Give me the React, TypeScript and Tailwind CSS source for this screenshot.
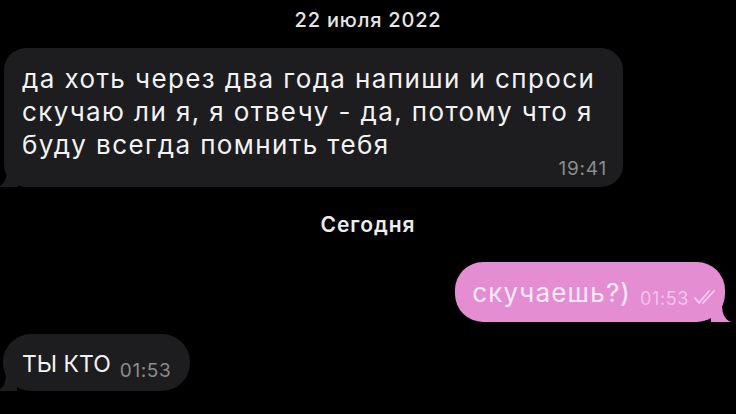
const font = { fontFamily: "Inter, 'Noto Sans', sans-serif" };

function TailLeft({ color }: { color: string }) {
  return (
    <svg className="absolute -left-[6px] bottom-0" width="20" height="18" viewBox="0 0 20 18">
      <path d="M20 0 L20 18 L0 18 C7 15 9 9 9 0 Z" fill={color} />
    </svg>
  );
}

function TailRight({ color }: { color: string }) {
  return (
    <svg className="absolute -right-[6px] bottom-0" width="20" height="18" viewBox="0 0 20 18">
      <path d="M0 0 L0 18 L20 18 C13 15 11 9 11 0 Z" fill={color} />
    </svg>
  );
}

function Checks() {
  return (
    <svg width="24" height="16" viewBox="0 0 24 16" fill="none" stroke="#f8d0f0" strokeWidth="1.8" strokeLinecap="round" strokeLinejoin="round">
      <path d="M2 9 L6 14 L16 2" />
      <path d="M10 14 L21 2" />
    </svg>
  );
}

export default function App() {
  return (
    <div className="w-[736px] h-[414px] bg-black overflow-hidden flex flex-col" style={font}>
      <div className="text-center text-[20px] leading-[24px] font-medium tracking-[0.8px] text-[#e6e6e6] pt-[8px]">
        22 июля 2022
      </div>

      <div className="relative ml-[4px] mt-[16px] w-[619px] bg-[#1d1d1f] rounded-[22px] pl-[18px] pr-[16px] pt-[14px] pb-[7px]">
        <p className="text-[26px] leading-[33px] text-[#f2f2f2] tracking-[1.4px]">
          да хоть через два года напиши и спроси
          <br />
          скучаю ли я, я отвечу - да, потому что я
          <br />
          буду всегда помнить тебя
        </p>
        <div className="flex justify-end -mt-[3px]">
          <span className="text-[19px] leading-[22px] tracking-[0.8px] text-[#8b8b8d]">19:41</span>
        </div>
        <TailLeft color="#1d1d1f" />
      </div>

      <div className="text-center text-[21px] leading-[24px] font-semibold tracking-[1px] text-[#ececec] mt-[26px]">
        Сегодня
      </div>

      <div className="flex justify-end pr-[11px] mt-[25px]">
        <div className="relative h-[60px] bg-[#e48dd3] rounded-[28px] pl-[17px] pr-[8px] flex items-center">
          <span className="text-[26px] leading-[30px] tracking-[1.2px] text-[#fdeaf8] mt-[2px]">скучаешь?)</span>
          <span className="ml-[9px] mt-[14px] text-[18px] leading-[20px] tracking-[0.6px] text-[#f6c2ec]">01:53</span>
          <span className="ml-[4px] mt-[10px]">
            <Checks />
          </span>
          <TailRight color="#e48dd3" />
        </div>
      </div>

      <div className="flex mt-[12px] pl-[3px]">
        <div className="relative h-[57px] w-[187px] bg-[#1d1d1f] rounded-[28px] pl-[19px] flex items-center">
          <span className="text-[23px] leading-[28px] text-[#f2f2f2] mt-[2px]">ТЫ КТО</span>
          <span className="ml-[9px] mt-[16px] text-[19px] leading-[22px] tracking-[0.6px] text-[#8b8b8d]">01:53</span>
          <TailLeft color="#1d1d1f" />
        </div>
      </div>
    </div>
  );
}
